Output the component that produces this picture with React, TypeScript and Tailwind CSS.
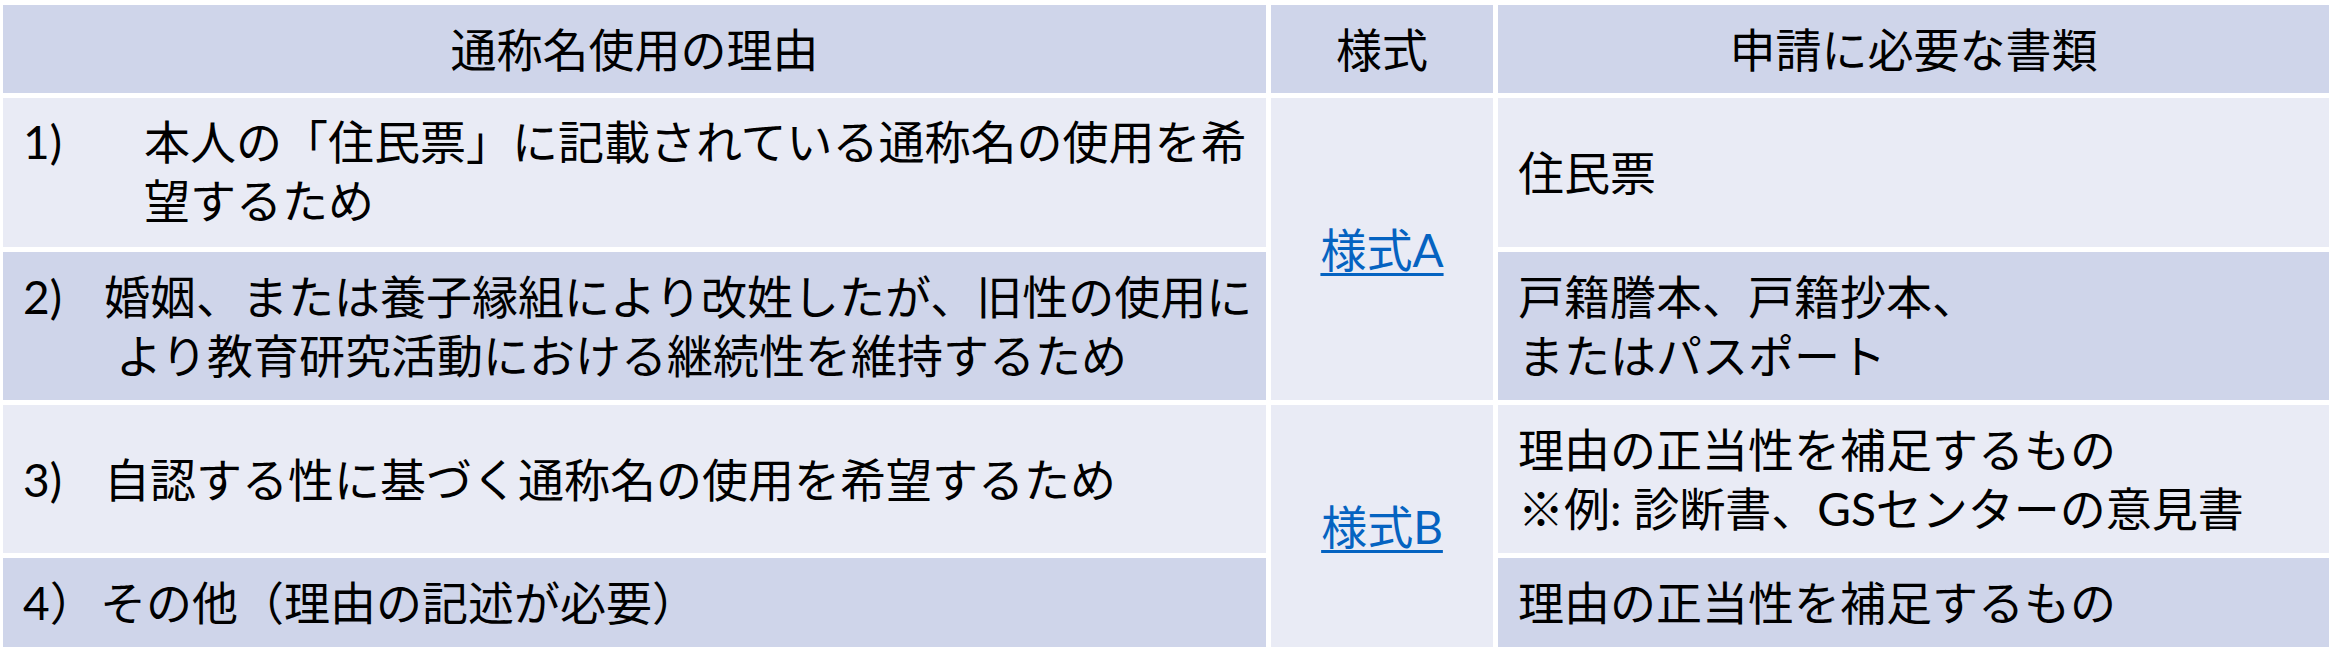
import React from "react";

const font = "font-['Lato','Noto_Sans_CJK_JP',sans-serif]";

export default function App() {
  const dark = "bg-[#CFD5EA]";
  const light = "bg-[#E9EBF5]";
  return (
    <div className={`w-[2336px] h-[660px] bg-white pt-[5px] pl-[3px] text-black text-[46px] leading-[59px] ${font}`}>
      <div className="grid grid-cols-[1263px_222px_831px] grid-rows-[88px_149px_148px_148px_89px] gap-[5px]">
        {/* header */}
        <div className={`${dark} flex items-center justify-center whitespace-nowrap`}>通称名使用の理由</div>
        <div className={`${dark} flex items-center justify-center whitespace-nowrap`}>様式</div>
        <div className={`${dark} flex items-center justify-center whitespace-nowrap`}>申請に必要な書類</div>

        {/* row 1 */}
        <div className={`${light} flex items-center pl-[20px] whitespace-nowrap`}>
          <div className="flex items-start -mt-[3px]">
            <span className="w-[121px] shrink-0">1)</span>
            <div>
              本人の「住民票」に記載されている通称名の使用を希
              <br />
              望するため
            </div>
          </div>
        </div>
        <div className={`${light} row-span-2 flex items-center justify-center`}>
          <a href="#" className="text-[#0563C1] underline decoration-[3px] underline-offset-[6px]">様式A</a>
        </div>
        <div className={`${light} flex items-center pl-[20px] whitespace-nowrap`}>住民票</div>

        {/* row 2 */}
        <div className={`${dark} flex items-center pl-[20px] whitespace-nowrap`}>
          <div className="flex items-start">
            <span className="w-[81px] shrink-0">2)</span>
            <div>
              婚姻、または養子縁組により改姓したが、旧性の使用に
              <br />
              <span className="pl-[12px]">より教育研究活動における継続性を維持するため</span>
            </div>
          </div>
        </div>
        <div className={`${dark} flex items-center pl-[20px] whitespace-nowrap`}>
          <div>
            戸籍謄本、戸籍抄本、
            <br />
            またはパスポート
          </div>
        </div>

        {/* row 3 */}
        <div className={`${light} flex items-center pl-[20px] whitespace-nowrap`}>
          <span className="w-[81px] shrink-0">3)</span>
          <span>自認する性に基づく通称名の使用を希望するため</span>
        </div>
        <div className={`${light} row-span-2 flex items-center justify-center`}>
          <a href="#" className="text-[#0563C1] underline decoration-[3px] underline-offset-[6px]">様式B</a>
        </div>
        <div className={`${light} flex items-center pl-[20px] whitespace-nowrap`}>
          <div>
            理由の正当性を補足するもの
            <br />
            ※例: 診断書、GSセンターの意見書
          </div>
        </div>

        {/* row 4 */}
        <div className={`${dark} flex items-center pl-[20px] whitespace-nowrap`}>
          <span className="w-[77px] shrink-0">4）</span>
          <span>その他（理由の記述が必要）</span>
        </div>
        <div className={`${dark} flex items-center pl-[20px] whitespace-nowrap`}>理由の正当性を補足するもの</div>
      </div>
    </div>
  );
}
